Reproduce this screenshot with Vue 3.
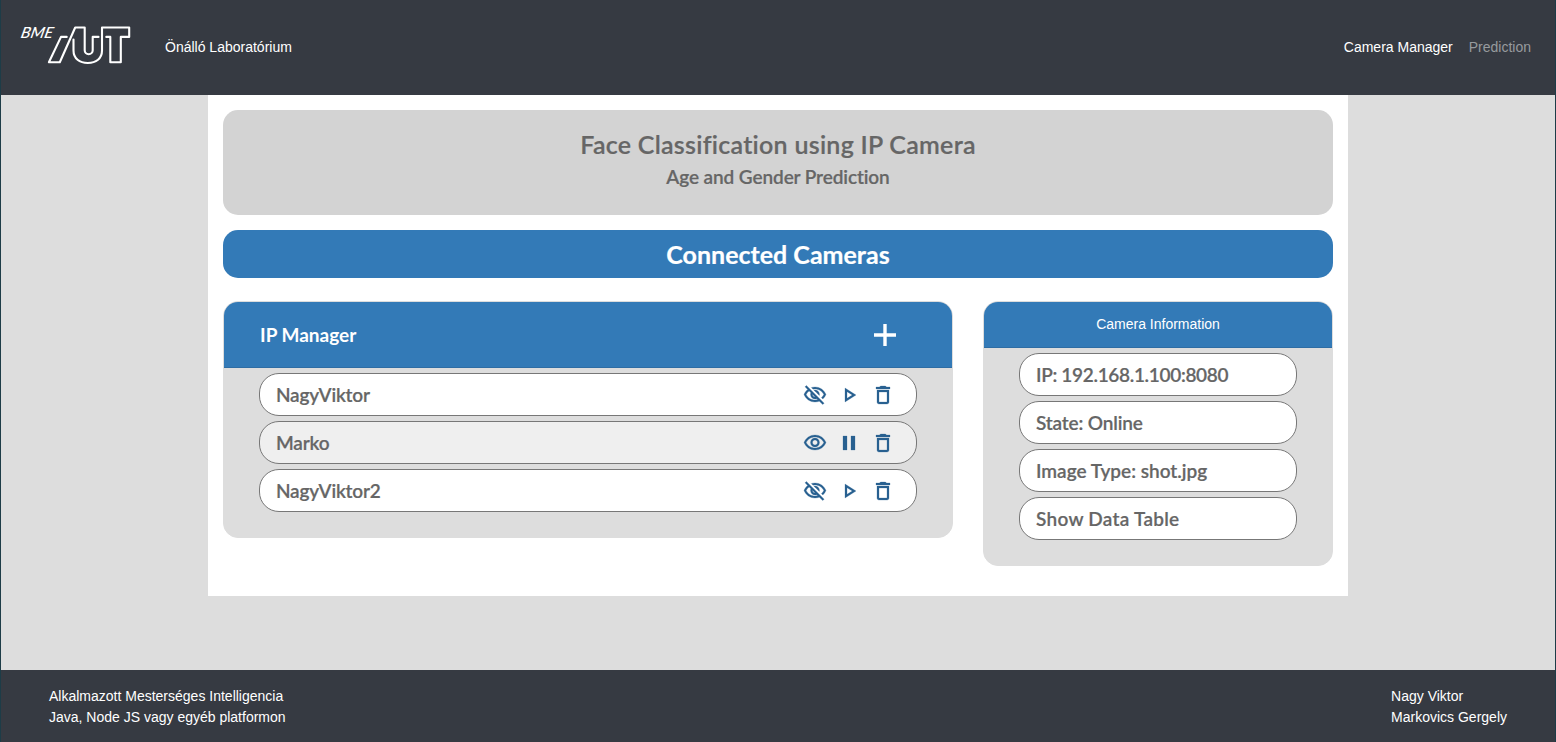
<script setup>
const cameras = [
  { name: 'NagyViktor', active: false },
  { name: 'Marko', active: true },
  { name: 'NagyViktor2', active: false },
]
const details = ['IP: 192.168.1.100:8080', 'State: Online', 'Image Type: shot.jpg', 'Show Data Table']
const icons = {
  hidden: 'M12 6c3.79 0 7.17 2.13 8.82 5.5-.59 1.22-1.42 2.27-2.41 3.12l1.41 1.41c1.39-1.23 2.49-2.77 3.18-4.53C21.27 7.11 17 4 12 4c-1.27 0-2.49.2-3.64.57l1.65 1.65C10.66 6.09 11.32 6 12 6zm-1.07 1.14L13 9.21c.57.25 1.03.71 1.28 1.28l2.07 2.07c.08-.34.14-.7.14-1.07C16.5 9.01 14.48 7 12 7c-.37 0-.72.05-1.07.14zM2.01 3.87l2.68 2.68C3.06 7.83 1.77 9.53 1 11.5 2.73 15.89 7 19 12 19c1.52 0 2.98-.29 4.32-.82l3.42 3.42 1.41-1.41L3.42 2.45 2.01 3.87zm7.5 7.5l2.61 2.61c-.04.01-.08.02-.12.02-1.38 0-2.5-1.12-2.5-2.5 0-.05.01-.08.01-.13zm-3.4-3.4l1.75 1.75c-.23.55-.36 1.15-.36 1.78 0 2.48 2.02 4.5 4.5 4.5.63 0 1.23-.13 1.77-.36l.98.98c-.88.24-1.8.38-2.75.38-3.79 0-7.17-2.13-8.82-5.5.7-1.43 1.72-2.61 2.93-3.53z',
  visible: 'M12 6c3.79 0 7.17 2.13 8.82 5.5C19.17 14.87 15.79 17 12 17s-7.17-2.13-8.82-5.5C4.83 8.13 8.21 6 12 6m0-2C7 4 2.73 7.11 1 11.5 2.73 15.89 7 19 12 19s9.27-3.11 11-7.5C21.27 7.11 17 4 12 4zm0 5c1.38 0 2.5 1.12 2.5 2.5S13.38 14 12 14s-2.5-1.12-2.5-2.5S10.62 9 12 9m0-2c-2.48 0-4.5 2.02-4.5 4.5S9.52 16 12 16s4.5-2.02 4.5-4.5S14.48 7 12 7z',
  play: 'M10 8.64L15.27 12 10 15.36V8.64M8 5v14l11-7L8 5z',
  pause: 'M6 19h4V5H6v14zm8-14v14h4V5h-4z',
  trash: 'M6 19c0 1.1.9 2 2 2h8c1.1 0 2-.9 2-2V7H6v12zM8 9h8v10H8V9zm7.500-5l-1-1h-5l-1 1H5v2h14V4z',
}
</script>

<template>
  <div class="page">
    <header class="navbar">
      <svg class="logo" width="112" height="42" viewBox="0 0 112 42">
        <text x="0" y="13.500" transform="translate(4.200 0) skewX(-13)" textLength="32" lengthAdjust="spacingAndGlyphs">BME</text>
        <path d="M47.700 12.900H42L29.900 38.200H40.800L56.200 3.500H65.700V26.200a4 4 0 0 0 8 0V12.900H79.500M54.500 15.500V26.500C54.500 34.500 60.500 39 68.800 39S83 34.500 83 26.500V3.500H110.200V12.900H101.800V38.200H91.300V12.900H87.300" />
      </svg>
      <span class="brand">Önálló Laboratórium</span>
      <nav class="links">
        <a>Camera Manager</a>
        <a class="muted">Prediction</a>
      </nav>
    </header>
    <main class="content">
      <section class="hero">
        <h1>Face Classification using IP Camera</h1>
        <h2>Age and Gender Prediction</h2>
      </section>
      <div class="banner">Connected Cameras</div>
      <div class="columns">
        <section class="panel manager">
          <div class="panel-head">
            <span class="title">IP Manager</span>
            <svg class="add" width="22" height="22" viewBox="0 0 22 22"><path d="M9.300 0h3.400v9.300H22v3.400h-9.300V22H9.300v-9.300H0V9.300h9.300z" /></svg>
          </div>
          <ul>
            <li v-for="c in cameras" :key="c.name" :class="{ active: c.active }">
              <span class="label camera">{{ c.name }}</span>
              <span class="actions">
                <svg viewBox="0 0 24 24"><path :d="c.active ? icons.visible : icons.hidden" /></svg>
                <svg viewBox="0 0 24 24"><path :d="c.active ? icons.pause : icons.play" /></svg>
                <svg viewBox="0 0 24 24"><path :d="icons.trash" /></svg>
              </span>
            </li>
          </ul>
        </section>
        <section class="panel info">
          <div class="panel-head">Camera Information</div>
          <ul>
            <li v-for="(d, i) in details" :key="d"><span class="label" :class="'info-' + i">{{ d }}</span></li>
          </ul>
        </section>
      </div>
    </main>
    <footer class="footer">
      <div>Alkalmazott Mesterséges Intelligencia<br />Java, Node JS vagy egyéb platformon</div>
      <div>Nagy Viktor<br />Markovics Gergely</div>
    </footer>
  </div>
</template>

<style>
body { margin: 0; overflow: hidden; }
</style>

<style scoped>
* { box-sizing: border-box; }
.page {
  height: 742px;
  display: flex;
  flex-direction: column;
  background: #ddd;
  border: solid #1d3c47;
  border-width: 0 1px;
  font: 14px/21px "Liberation Sans", Arial, sans-serif;
  color: #fff;
}
.navbar { height: 95px; flex: none; background: #363a42; display: flex; align-items: center; padding: 0 24px 0 18px; }
.logo { flex: none; margin-top: -5px; fill: none; stroke: #fff; stroke-width: 2.100; stroke-linejoin: round; stroke-linecap: round; }
.logo text { font: italic 500 15.500px Lato, sans-serif; fill: #fff; stroke: none; }
.brand { margin-left: 34px; }
.links { margin-left: auto; display: flex; gap: 16px; }
.muted { color: #979a9e; }
.content { width: 1140px; height: 501px; flex: none; align-self: center; background: #fff; padding: 15px; }
.hero { height: 105px; border-radius: 15px; background: #d3d3d3; color: #666; text-align: center; padding-top: 18px; }
h1, h2, .banner, .title, .label { font-family: Lato, sans-serif; font-weight: 600; white-space: nowrap; font-variant-ligatures: none; }
h1, h2, .label { -webkit-text-stroke: 0.200px #666; }
h1 { margin: 0; font-size: 25px; line-height: 32px; letter-spacing: 0.270px; }
h2 { margin: 4px 0 0; font-size: 19px; line-height: 26px; letter-spacing: -0.100px; }
.banner { height: 48px; margin-top: 15px; border-radius: 15px; background: #337ab7; text-align: center; font-size: 25px; line-height: 48px; font-weight: 700; -webkit-text-stroke: 0.200px #fff; }
.columns { display: flex; gap: 30px; margin-top: 23px; align-items: flex-start; }
.panel { border: 1px solid #ddd; border-radius: 15px; background: #ddd; overflow: hidden; }
.manager { width: 730px; height: 237px; }
.info { width: 350px; height: 265px; }
.panel-head { background: #337ab7; border-bottom: 1px solid #2e6da4; }
.manager .panel-head { height: 66px; display: flex; align-items: center; justify-content: space-between; padding: 0 56px 0 36px; }
.title { font-size: 19px; font-weight: 700; }
.add { fill: #fff; }
.info .panel-head { height: 46px; line-height: 45px; text-align: center; }
ul { list-style: none; margin: 5px 35px 0; padding: 0; display: flex; flex-direction: column; gap: 5px; }
li { height: 43px; background: #fff; border: 1px solid #777; border-radius: 20px; display: flex; align-items: center; justify-content: space-between; padding: 0 21px 0 16px; color: #666; }
li.active { background: #efefef; }
.label { font-size: 19px; line-height: 24px; }
.camera { letter-spacing: -0.200px; }
.info-0 { letter-spacing: -0.320px; }
.info-1 { letter-spacing: -0.150px; }
.info-3 { letter-spacing: 0.270px; }
.actions { display: flex; gap: 10px; }
.actions svg { width: 24px; height: 24px; fill: #286090; stroke: #286090; stroke-width: 0.250; }
.footer { height: 72px; flex: none; margin-top: auto; background: #363a42; display: flex; justify-content: space-between; padding: 16px 48px 0; }
</style>
